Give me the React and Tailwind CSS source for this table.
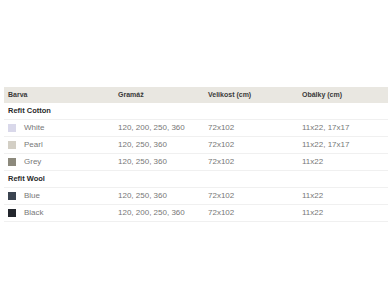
export default function App() {
  const groups = [
    {
      name: "Refit Cotton",
      rows: [
        { c: "#d9d8ea", n: "White", g: "120, 200, 250, 360", v: "72x102", o: "11x22, 17x17" },
        { c: "#d3cfc5", n: "Pearl", g: "120, 250, 360", v: "72x102", o: "11x22, 17x17" },
        { c: "#8c897c", n: "Grey", g: "120, 250, 360", v: "72x102", o: "11x22" },
      ],
    },
    {
      name: "Refit Wool",
      rows: [
        { c: "#3b4450", n: "Blue", g: "120, 250, 360", v: "72x102", o: "11x22" },
        { c: "#23262d", n: "Black", g: "120, 200, 250, 360", v: "72x102", o: "11x22" },
      ],
    },
  ];
  return (
    <div className="w-[392px] h-[294px] bg-white pt-[87px] px-[4px]" style={{ fontFamily: '"Liberation Sans", Arial, sans-serif' }}>
      <div className="grid grid-cols-[114px_90px_94px_1fr] h-[16px] items-center bg-[#e9e7e1] text-[7px] font-bold text-[#3a3a3a]">
        <div className="pl-[4px]">Barva</div>
        <div>Gramáž</div>
        <div>Velikost (cm)</div>
        <div>Obálky (cm)</div>
      </div>
      {groups.map((g) => (
        <div key={g.name}>
          <div className="h-[17px] flex items-center pl-[4px] text-[7.5px] font-bold text-[#2a2a2a] border-b border-[#f0f0f0]">
            {g.name}
          </div>
          {g.rows.map((r) => (
            <div key={r.n} className="grid grid-cols-[114px_90px_94px_1fr] h-[17px] items-center text-[8px] text-[#777] border-b border-[#f0f0f0]">
              <div className="flex items-center pl-[4px] gap-[8px]">
                <span className="w-[8px] h-[8px] inline-block" style={{ backgroundColor: r.c }} />
                <span>{r.n}</span>
              </div>
              <div>{r.g}</div>
              <div>{r.v}</div>
              <div>{r.o}</div>
            </div>
          ))}
        </div>
      ))}
    </div>
  );
}
